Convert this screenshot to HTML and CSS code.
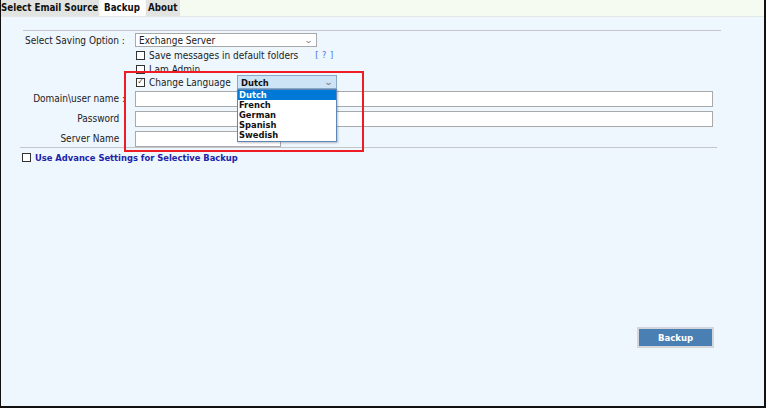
FILE: index.html
```html
<!DOCTYPE html>
<html>
<head>
<meta charset="utf-8">
<link rel="stylesheet" href="styles.css">
</head>
<body>
<div class="window">
  <div class="tabbar">
    <div class="tab">Select Email Source</div>
    <div class="tab active">Backup</div>
    <div class="tab">About</div>
  </div>
  <div class="content">
    <div class="rule rule-top"></div>
    <div class="form">
      <div class="row">
        <div class="label label-left">Select Saving Option :</div>
        <div class="select select-wide"><span>Exchange Server</span><span class="chev">&#8964;</span></div>
      </div>
      <div class="row row-check">
        <div class="label"></div>
        <div class="check-line"><span class="box"></span><span>Save messages in default folders</span><span class="help">[ ? ]</span></div>
      </div>
      <div class="row row-check">
        <div class="label"></div>
        <div class="check-line"><span class="box"></span><span>I am Admin</span></div>
      </div>
      <div class="row row-lang">
        <div class="label"></div>
        <div class="check-line"><span class="box checked">&#10003;</span><span class="lang-label">Change Language</span>
          <div class="lang-wrap">
            <div class="select select-lang"><span>Dutch</span><span class="chev">&#8964;</span></div>
            <ul class="dropdown">
              <li class="sel">Dutch</li>
              <li>French</li>
              <li>German</li>
              <li>Spanish</li>
              <li>Swedish</li>
            </ul>
          </div>
        </div>
      </div>
      <div class="row row-input">
        <div class="label label-right">Domain\user name :</div>
        <div class="input input-wide"></div>
      </div>
      <div class="row row-input">
        <div class="label label-right">Password&nbsp;&nbsp;</div>
        <div class="input input-wide"></div>
      </div>
      <div class="row row-input">
        <div class="label label-right">Server Name&nbsp;&nbsp;</div>
        <div class="input input-short"></div>
      </div>
      <div class="highlight"></div>
    </div>
    <div class="rule rule-bottom"></div>
    <div class="advance"><span class="box"></span><span>Use Advance Settings for Selective Backup</span></div>
    <div class="actions">
      <button class="btn">Backup</button>
    </div>
  </div>
</div>
</body>
</html>
```
FILE: styles.css
```css
html, body {
  margin: 0;
  padding: 0;
}
body {
  width: 766px;
  height: 408px;
  font-family: "DejaVu Sans Condensed", "DejaVu Sans", sans-serif;
  font-size: 10px;
  color: #222;
  overflow: hidden;
}
.window {
  box-sizing: border-box;
  width: 766px;
  height: 408px;
  border-left: 1px solid #111;
  border-right: 2px solid #111;
  border-bottom: 2px solid #111;
  background: #eef6fe;
  display: flex;
  flex-direction: column;
}
.tabbar {
  height: 16px;
  background: #f5fbf1;
  border-bottom: 1px solid #e3e8e4;
  display: flex;
  align-items: flex-start;
}
.tab {
  height: 16px;
  line-height: 16px;
  padding: 0 0 0 0;
  width: 98px;
  background: #e2e4e2;
  font-weight: bold;
  font-size: 9.7px;
  color: #111;
  margin-right: 2px;
  white-space: nowrap;
}
.tab.active {
  background: #ffffff;
  width: 44px;
  padding-left: 3px;
  box-sizing: border-box;
  margin-right: 1px;
}
.tab:last-child {
  width: 34px;
  padding-left: 2px;
  box-sizing: border-box;
}
.content {
  position: relative;
  flex: 1;
}
.rule {
  height: 1px;
  background: #c3c7cc;
}
.rule-top {
  margin: 13px 43px 0 22px;
}
.form {
  position: relative;
  margin-top: 2px;
}
.row {
  display: flex;
  align-items: center;
}
.label {
  width: 134px;
  flex: none;
  box-sizing: border-box;
}
.label-left {
  padding-left: 24px;
}
.label-right {
  text-align: right;
  padding-right: 10px;
}
.row:first-child {
  height: 14px;
}
.select {
  box-sizing: border-box;
  height: 14px;
  border: 1px solid #a8a8a8;
  background: #fff;
  display: flex;
  align-items: center;
  justify-content: space-between;
  padding: 0 4px 0 3px;
}
.select-wide {
  width: 182px;
}
.chev {
  font-size: 9px;
  color: #888;
  line-height: 1;
  transform: scaleX(1.4);
}
.row-check {
  height: 14px;
}
.row-check:nth-child(2) {
  margin-top: 1px;
}
.check-line {
  display: flex;
  align-items: center;
  gap: 4px;
  padding-left: 1px;
}
.box {
  box-sizing: border-box;
  width: 9px;
  height: 9px;
  border: 1px solid #333;
  background: #fff;
  display: inline-flex;
  align-items: center;
  justify-content: center;
  font-size: 8px;
  line-height: 1;
  color: #333;
}
.help {
  margin-left: 13px;
  color: #4a6fd8;
  font-size: 9px;
  letter-spacing: 0.5px;
}
.row-lang {
  height: 14px;
  margin-top: -1px;
}
.lang-label {
  width: 84px;
}
.lang-wrap {
  position: relative;
}
.select-lang {
  width: 100px;
  background: #cde3f6;
  border-color: #8aa9c8;
  font-weight: bold;
  font-size: 9.3px;
  color: #111;
}
.dropdown {
  position: absolute;
  left: 0;
  top: 14px;
  width: 100px;
  box-sizing: border-box;
  margin: 0;
  padding: 0 0 1px;
  list-style: none;
  background: #fff;
  border: 1px solid #5f87b5;
  box-shadow: 1px 1px 2px rgba(0,0,0,0.25);
  z-index: 3;
  font-weight: bold;
  font-size: 9.3px;
  color: #111;
}
.dropdown li {
  height: 10px;
  line-height: 10px;
  padding-left: 1px;
}
.dropdown li.sel {
  background: #0078d7;
  color: #fff;
}
.row-input {
  height: 15px;
  margin-top: 5px;
}
.row-lang + .row-input {
  margin-top: 2px;
}
.input {
  box-sizing: border-box;
  height: 16px;
  border: 1px solid #a9a9a9;
  background: #fff;
}
.input-wide {
  width: 578px;
}
.input-short {
  width: 146px;
}
.highlight {
  position: absolute;
  left: 123px;
  top: 38px;
  width: 240px;
  height: 81px;
  box-sizing: border-box;
  border: 2px solid #ee1c24;
  z-index: 2;
  pointer-events: none;
}
.rule-bottom {
  margin: 1px 47px 0 19px;
}
.advance {
  display: flex;
  align-items: center;
  gap: 4px;
  margin: 3px 0 0 21px;
  color: #1c24a8;
  font-weight: bold;
  font-size: 9.3px;
  height: 12px;
}
.actions {
  display: flex;
  justify-content: flex-end;
  margin-top: 164px;
  padding-right: 50px;
}
.btn {
  width: 77px;
  height: 21px;
  border: 2px solid #d3d6da;
  background: #4a7fb4;
  color: #fff;
  font-family: "DejaVu Sans Condensed", "DejaVu Sans", sans-serif;
  font-weight: bold;
  font-size: 9.5px;
  padding: 0;
}
```
